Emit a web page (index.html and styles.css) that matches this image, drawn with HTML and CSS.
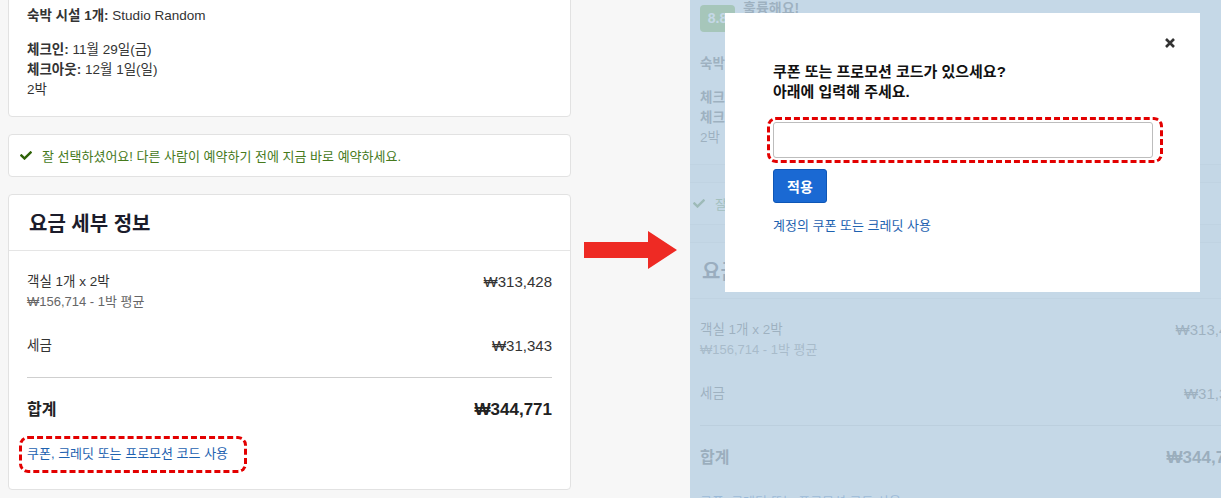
FILE: index.html
```html
<!DOCTYPE html>
<html lang="ko">
<head>
    <meta charset="UTF-8">
    <meta name="viewport" content="width=device-width, initial-scale=1.0">
    <title>쿠폰 또는 프로모션 코드</title>
    <link rel="stylesheet" href="styles.css">
</head>
<body>

<div class="left">
    <div class="page">
        <div class="card card-stay">
            <div class="rating">
                <span class="score">8.8</span>
                <span class="rating-text">훌륭해요!</span>
            </div>
            <p class="stay-name"><b>숙박 시설 1개:</b> Studio Random</p>
            <p class="stay-dates"><b>체크인:</b> 11월 29일(금)<br><b>체크아웃:</b> 12월 1일(일)<br>2박</p>
        </div>

        <div class="card card-notice">
            <svg class="check" viewBox="0 72 512 368" width="12" height="9"><path d="M173.9 439.4l-166.4-166.4c-10-10-10-26.2 0-36.2l36.2-36.2c10-10 26.2-10 36.2 0L192 312.7 432.1 72.6c10-10 26.2-10 36.2 0l36.2 36.2c10 10 10 26.2 0 36.2l-294.4 294.4c-10 10-26.2 10-36.2 0z"/></svg>
            <span>잘 선택하셨어요! 다른 사람이 예약하기 전에 지금 바로 예약하세요.</span>
        </div>

        <div class="card card-price">
            <h2 class="price-title">요금 세부 정보</h2>
            <div class="price-body">
                <div class="price-row">
                    <div>
                        <div class="row-label">객실 1개 x 2박</div>
                        <div class="row-sub">₩156,714 - 1박 평균</div>
                    </div>
                    <div class="row-value">₩313,428</div>
                </div>
                <div class="price-row tax">
                    <div class="row-label">세금</div>
                    <div class="row-value">₩31,343</div>
                </div>
                <hr class="divider">
                <div class="price-row total">
                    <div class="row-label">합계</div>
                    <div class="row-value">₩344,771</div>
                </div>
                <div class="coupon annotate"><a href="#">쿠폰, 크레딧 또는 프로모션 코드 사용</a></div>
            </div>
        </div>
    </div>

    <div class="arrow-wrap">
        <svg width="94" height="38" viewBox="0 0 94 38"><polygon points="0,11 64,11 64,0 93,19 64,38 64,27 0,27" fill="#ee2a24"/></svg>
    </div>
</div>

<div class="right">
    <div class="page">
        <div class="card card-stay">
            <div class="rating">
                <span class="score">8.8</span>
                <span class="rating-text">훌륭해요!</span>
            </div>
            <p class="stay-name"><b>숙박 시설 1개:</b> Studio Random</p>
            <p class="stay-dates"><b>체크인:</b> 11월 29일(금)<br><b>체크아웃:</b> 12월 1일(일)<br>2박</p>
        </div>

        <div class="card card-notice">
            <svg class="check" viewBox="0 72 512 368" width="12" height="9"><path d="M173.9 439.4l-166.4-166.4c-10-10-10-26.2 0-36.2l36.2-36.2c10-10 26.2-10 36.2 0L192 312.7 432.1 72.6c10-10 26.2-10 36.2 0l36.2 36.2c10 10 10 26.2 0 36.2l-294.4 294.4c-10 10-26.2 10-36.2 0z"/></svg>
            <span>잘 선택하셨어요! 다른 사람이 예약하기 전에 지금 바로 예약하세요.</span>
        </div>

        <div class="card card-price">
            <h2 class="price-title">요금 세부 정보</h2>
            <div class="price-body">
                <div class="price-row">
                    <div>
                        <div class="row-label">객실 1개 x 2박</div>
                        <div class="row-sub">₩156,714 - 1박 평균</div>
                    </div>
                    <div class="row-value">₩313,428</div>
                </div>
                <div class="price-row tax">
                    <div class="row-label">세금</div>
                    <div class="row-value">₩31,343</div>
                </div>
                <hr class="divider">
                <div class="price-row total">
                    <div class="row-label">합계</div>
                    <div class="row-value">₩344,771</div>
                </div>
                <div class="coupon"><a href="#">쿠폰, 크레딧 또는 프로모션 코드 사용</a></div>
            </div>
        </div>
    </div>

    <div class="dim"></div>

    <div class="modal">
        <button class="close" aria-label="닫기">
            <svg width="10" height="10" viewBox="0 0 10 10"><path d="M1 1L9 9M9 1L1 9" stroke="#333" stroke-width="2.6"/></svg>
        </button>
        <h3 class="modal-title">쿠폰 또는 프로모션 코드가 있으세요?<br>아래에 입력해 주세요.</h3>
        <div class="input-mark">
            <input type="text" class="code-input">
        </div>
        <button class="apply">적용</button>
        <a href="#" class="account-link">계정의 쿠폰 또는 크레딧 사용</a>
    </div>
</div>

</body>
</html>
```

FILE: styles.css
```css
body {
    margin: 0;
    height: 498px;
    overflow: hidden;
    display: flex;
    background-color: #f7f7f7;
    font-family: "Liberation Sans", "Noto Sans CJK KR", sans-serif;
    color: #333;
}
.left {
    width: 690px;
    height: 498px;
    flex-shrink: 0;
    display: flex;
    overflow: hidden;
}
.left .page {
    margin: -60px 0 0 8px;
}
.arrow-wrap {
    flex: 1;
    align-self: center;
    display: flex;
    justify-content: center;
    padding-top: 1px;
}
.right {
    flex: 1;
    height: 498px;
    position: relative;
    overflow: hidden;
}
.right .page {
    width: 582px;
    margin: -12px 0 0 -9px;
}
.page {
    width: 563px;
    flex-shrink: 0;
    display: flex;
    flex-direction: column;
    gap: 17px;
}
.card {
    background-color: #fff;
    border: 1px solid #e2e2e2;
    border-radius: 4px;
}

/* stay summary */
.card-stay {
    padding: 16px 18px 16px;
    font-size: 13.5px;
    line-height: 20px;
}
.rating {
    display: flex;
    align-items: flex-start;
    gap: 8px;
    height: 27px;
}
.score {
    width: 35px;
    height: 27px;
    line-height: 27px;
    border-radius: 4px;
    background-color: #5a9e12;
    color: #fff;
    font-weight: bold;
    font-size: 14px;
    text-align: center;
}
.rating-text {
    margin-top: -5px;
    font-size: 14px;
    font-weight: bold;
    line-height: 16px;
}
.stay-name {
    margin: 22px 0 0;
}
.stay-dates {
    margin: 14px 0 0;
}

/* notice */
.card-notice {
    display: flex;
    align-items: center;
    gap: 10px;
    padding: 11px 11px;
    height: 19px;
    font-size: 13px;
    color: #467a1c;
}
.check {
    fill: #2f6308;
    flex-shrink: 0;
}

/* price details */
.price-title {
    margin: 0;
    height: 55px;
    padding: 0 20px;
    display: flex;
    align-items: center;
    border-bottom: 1px solid #e5e5e5;
    font-size: 20px;
    color: #1b1c2b;
}
.price-body {
    padding: 21px 18px 16px;
}
.price-row {
    display: flex;
    justify-content: space-between;
    align-items: flex-start;
    font-size: 13.5px;
    line-height: 20px;
}
.row-value {
    font-size: 15px;
}
.row-sub {
    font-size: 13px;
    color: #666;
}
.price-row.tax {
    margin-top: 24px;
}
.divider {
    margin: 21px 0 0;
    border: 0;
    border-top: 1px solid #cfcfcf;
}
.price-row.total {
    margin-top: 21px;
    font-size: 16px;
    line-height: 22px;
    font-weight: bold;
    color: #222;
}
.price-row.total .row-value {
    font-size: 17px;
}
.coupon {
    margin: 15px 0 0 -8px;
    width: fit-content;
    padding: 5px 16px 6px 5px;
    border: 3px dashed transparent;
    border-radius: 9px;
    font-size: 13px;
    line-height: 20px;
}
.coupon.annotate {
    border-color: #e30000;
}
.coupon a,
.account-link {
    color: #1e62b0;
    text-decoration: none;
}

/* modal over the dimmed page */
.dim {
    position: absolute;
    inset: 0;
    background-color: rgba(184, 207, 226, 0.81);
}
.modal {
    position: absolute;
    left: 35px;
    top: 13px;
    width: 475px;
    height: 279px;
    box-sizing: border-box;
    padding: 49px 48px 0;
    background-color: #fff;
}
.close {
    position: absolute;
    top: 25px;
    right: 25px;
    padding: 0;
    border: none;
    background: none;
    line-height: 0;
}
.modal-title {
    margin: 0 0 15px;
    font-size: 15px;
    line-height: 20px;
    color: #111;
}
.input-mark {
    width: fit-content;
    margin-left: -6px;
    padding: 2px 7px 2px 3px;
    border: 3px dashed #e30000;
    border-radius: 9px;
}
.code-input {
    display: block;
    box-sizing: border-box;
    width: 380px;
    height: 36px;
    margin: 0;
    border: 1px solid #bdbdbd;
    border-radius: 3px;
}
.apply {
    display: block;
    margin-top: 6px;
    width: 54px;
    height: 34px;
    padding: 0;
    border: 1px solid #0e56b6;
    border-radius: 3px;
    background-color: #1a69d3;
    color: #fff;
    font-family: inherit;
    font-weight: bold;
    font-size: 14px;
}
.account-link {
    display: block;
    margin-top: 14px;
    font-size: 13px;
    line-height: 18px;
}
```
